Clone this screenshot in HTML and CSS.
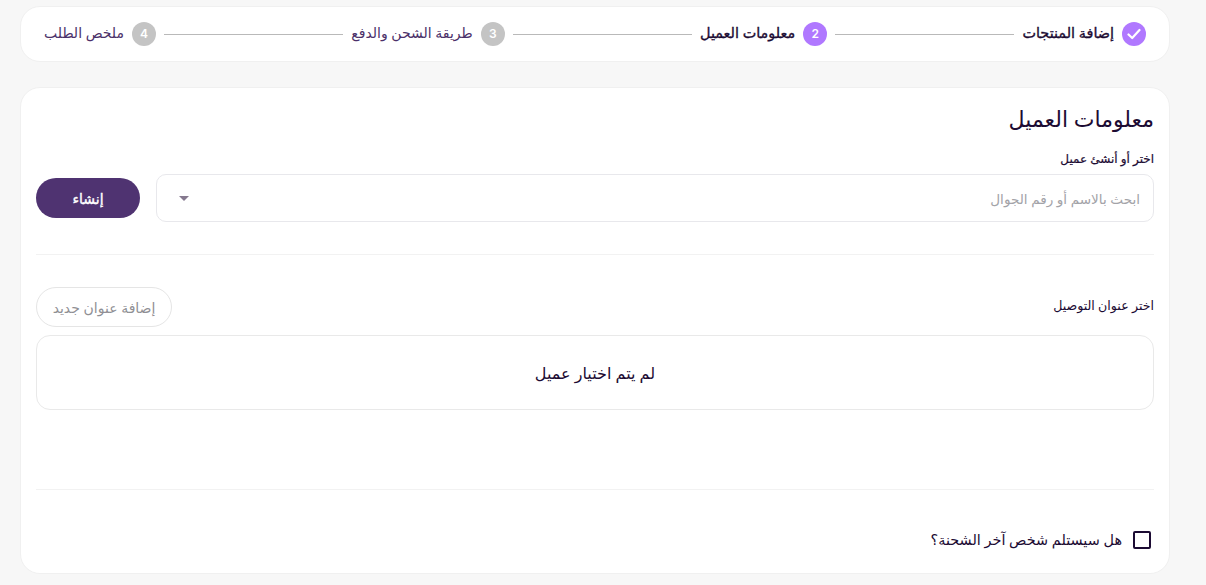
FILE: index.html
```html
<!DOCTYPE html>
<html lang="ar" dir="rtl">
<head>
	<title>معلومات العميل</title>
	<meta name="viewport" content="width=device-width,initial-scale=1.0" />
	<link rel="stylesheet" href="styles.css">
</head>
<body>
	<div class="page">
		<div class="stepper">
			<div class="step done">
				<span class="num">
					<svg width="14" height="12" viewBox="0 0 14 12"><path d="M1.5 6.5 L5.2 10 L12.5 2" fill="none" stroke="#fff" stroke-width="2.2" stroke-linecap="round" stroke-linejoin="round"/></svg>
				</span>
				<span class="name">إضافة المنتجات</span>
			</div>
			<div class="line"></div>
			<div class="step active">
				<span class="num">2</span>
				<span class="name">معلومات العميل</span>
			</div>
			<div class="line"></div>
			<div class="step">
				<span class="num">3</span>
				<span class="name">طريقة الشحن والدفع</span>
			</div>
			<div class="line"></div>
			<div class="step">
				<span class="num">4</span>
				<span class="name">ملخص الطلب</span>
			</div>
		</div>

		<div class="card">
			<h1 class="title">معلومات العميل</h1>
			<div class="label">اختر أو أنشئ عميل</div>
			<div class="row">
				<div class="select">
					<span class="placeholder">ابحث بالاسم أو رقم الجوال</span>
					<span class="arrow"></span>
				</div>
				<div class="btn-main">إنشاء</div>
			</div>
			<div class="sep sep-one"></div>
			<div class="row-address">
				<div class="label-address">اختر عنوان التوصيل</div>
				<div class="btn-outline">إضافة عنوان جديد</div>
			</div>
			<div class="empty">لم يتم اختيار عميل</div>
			<div class="sep sep-two"></div>
			<label class="check">
				<span class="box"></span>
				<span>هل سيستلم شخص آخر الشحنة؟</span>
			</label>
		</div>
	</div>
</body>
</html>
```

FILE: styles.css
```css
body {
	margin: 0;
	padding: 0;
	background-color: #f7f7f7;
	font-family: "Noto Sans", "DejaVu Sans", sans-serif;
	color: #1c0b33;
}
.page {
	padding: 6px 36px 0 20px;
}
.stepper {
	display: flex;
	align-items: center;
	gap: 8px;
	height: 54px;
	padding: 0 23px;
	background-color: #fff;
	border: 1px solid #f0f0f0;
	border-radius: 20px;
	margin-bottom: 25px;
}
.step {
	display: flex;
	align-items: center;
	gap: 8px;
	font-size: 14px;
	line-height: 20px;
	color: #4b3069;
	white-space: nowrap;
}
.name {
	position: relative;
	top: -1px;
}
.step.done, .step.active {
	font-size: 14.4px;
	color: #1c0b33;
	-webkit-text-stroke: 0.35px #1c0b33;
}
.num {
	display: flex;
	align-items: center;
	justify-content: center;
	width: 24px;
	height: 24px;
	border-radius: 50%;
	background-color: #c4c4c4;
	color: #fff;
	font-family: "Inter", sans-serif;
	font-size: 12px;
	font-weight: 600;
	-webkit-text-stroke: 0;
}
.done .num, .active .num {
	background-color: #b078ff;
}
.line {
	flex: 1;
	height: 1px;
	background-color: #b9b9b9;
}
.card {
	background-color: #fff;
	border: 1px solid #f0f0f0;
	border-radius: 20px;
	padding: 16px 15px 0;
	height: 469px;
}
.title {
	margin: 0;
	font-size: 22px;
	font-weight: 400;
	line-height: 28px;
	color: #1c0b33;
}
.label {
	font-size: 12px;
	line-height: 16px;
	margin-top: 19px;
	margin-bottom: 7px;
	-webkit-text-stroke: 0.2px #1c0b33;
}
.row {
	display: flex;
	align-items: center;
	gap: 16px;
}
.select {
	flex: 1;
	display: flex;
	align-items: center;
	justify-content: space-between;
	height: 46px;
	padding: 0 13px 0 22px;
	border: 1px solid #e8e8ec;
	border-radius: 10px;
}
.placeholder {
	font-size: 13.6px;
	color: #a3a3a8;
}
.arrow {
	width: 0;
	height: 0;
	border-left: 5px solid transparent;
	border-right: 5px solid transparent;
	border-top: 5px solid #85798f;
}
.btn-main {
	display: flex;
	align-items: center;
	justify-content: center;
	width: 104px;
	height: 40px;
	border-radius: 20px;
	background-color: #4f3371;
	color: #fff;
	font-size: 14px;
	-webkit-text-stroke: 0.35px #fff;
}
.sep {
	height: 1px;
	background-color: #f2f2f2;
}
.sep-one {
	margin-top: 32px;
}
.row-address {
	display: flex;
	align-items: center;
	justify-content: space-between;
	margin-top: 32px;
	margin-bottom: 8px;
}
.label-address {
	font-size: 12.6px;
	line-height: 16px;
	margin-top: -2px;
}
.btn-outline {
	display: flex;
	align-items: center;
	justify-content: center;
	width: 134px;
	height: 38px;
	border: 1px solid #e5e5e5;
	border-radius: 20px;
	font-size: 14px;
	color: #8f8f94;
}
.empty {
	display: flex;
	align-items: center;
	justify-content: center;
	height: 73px;
	border: 1px solid #e9e9e9;
	border-radius: 14px;
	font-size: 16px;
}
.sep-two {
	margin-top: 79px;
}
.check {
	display: flex;
	align-items: center;
	gap: 11px;
	margin-top: 40px;
	font-size: 14.4px;
}
.box {
	width: 14px;
	height: 14px;
	margin-right: 3px;
	border: 2px solid #1c0b33;
	border-radius: 2px;
}
```
